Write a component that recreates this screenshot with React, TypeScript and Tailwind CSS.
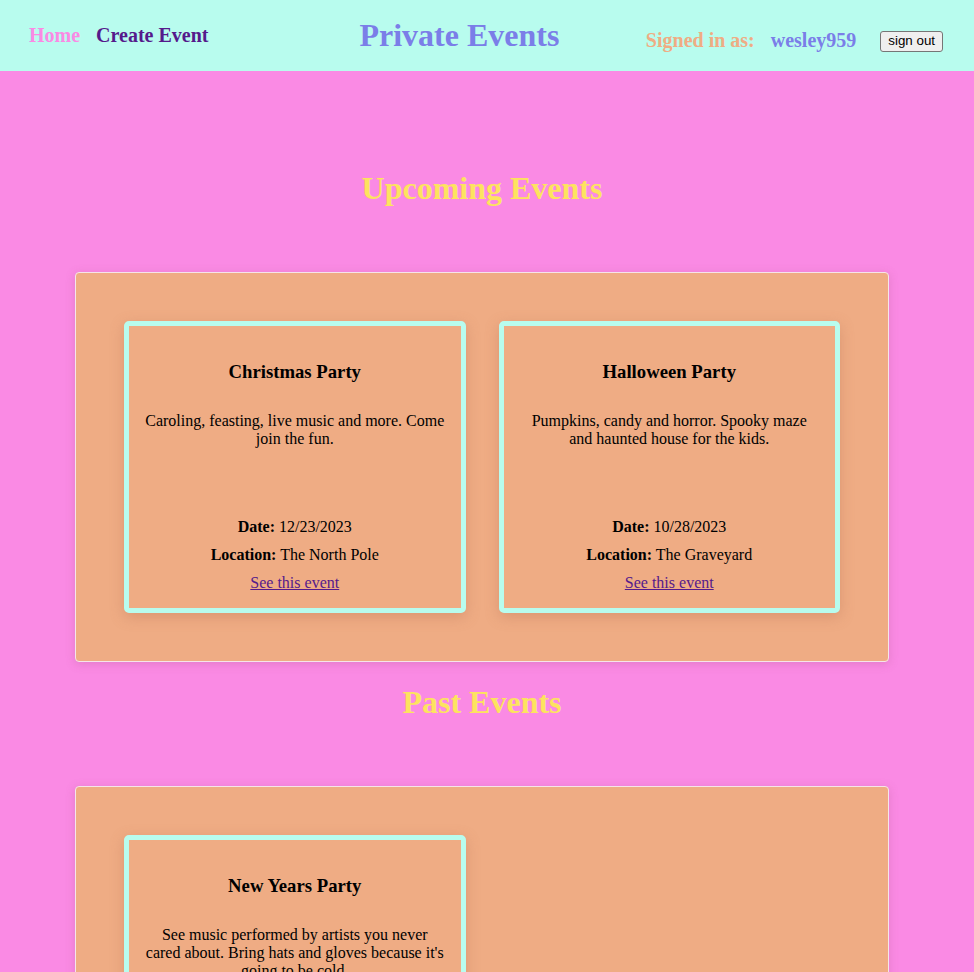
import React from 'react';

interface EventItem {
  title: string;
  description: string;
  date: string;
  location: string;
}

const upcoming: EventItem[] = [
  {
    title: 'Christmas Party',
    description: 'Caroling, feasting, live music and more. Come join the fun.',
    date: '12/23/2023',
    location: 'The North Pole',
  },
  {
    title: 'Halloween Party',
    description: 'Pumpkins, candy and horror. Spooky maze and haunted house for the kids.',
    date: '10/28/2023',
    location: 'The Graveyard',
  },
];

const past: EventItem[] = [
  {
    title: 'New Years Party',
    description: "See music performed by artists you never cared about. Bring hats and gloves because it's going to be cold.",
    date: '12/31/2022',
    location: 'Times Square',
  },
];

function EventCard({ event }: { event: EventItem }) {
  return (
    <div className="flex flex-col h-[292px] border-[5px] border-[#b8fcee] rounded-[5px] bg-[#efac84] px-4 pt-4 pb-4 text-center text-black shadow-[0_4px_14px_rgba(180,110,80,0.35)]">
      <h3 className="mt-[19px] mb-[29.5px] text-[18.72px] leading-[21px] font-bold">{event.title}</h3>
      <p className="h-[106.5px] text-[16px] leading-[18px]">{event.description}</p>
      <p className="text-[16px] leading-[18px]">
        <span className="font-bold">Date:</span> {event.date}
      </p>
      <p className="mt-[10px] text-[16px] leading-[18px]">
        <span className="font-bold">Location:</span> {event.location}
      </p>
      <a href="#" className="mt-[10px] text-[16px] leading-[18px] text-[#551a8b] underline">
        See this event
      </a>
    </div>
  );
}

function EventSection({ heading, events, spacing }: { heading: string; events: EventItem[]; spacing: string }) {
  return (
    <section>
      <h2 className={`${spacing} pr-[10px] text-center text-[32px] leading-[37px] font-bold text-[#fde35f]`}>{heading}</h2>
      <div className="ml-[75px] w-[814px] grid grid-cols-2 gap-[33px] p-12 bg-[#efac84] border border-[#f6e4e9] rounded-[4px] shadow-[0_2px_10px_rgba(160,80,120,0.25)]">
        {events.map((e) => (
          <EventCard key={e.title} event={e} />
        ))}
      </div>
    </section>
  );
}

export default function App() {
  return (
    <div className="min-h-screen bg-[#fa8ae4] pb-10 font-['Liberation_Serif',serif]">
      <header className="flex items-center h-[71px] pl-[29px] pr-[31px] bg-[#b8fcee]">
        <nav className="flex gap-4 text-[20px] font-bold leading-[23px]">
          <a href="#" className="text-[#fa8ae4]">Home</a>
          <a href="#" className="text-[#551a8b]">Create Event</a>
        </nav>
        <h1 className="ml-[151px] text-[32px] leading-[37px] font-bold text-[#7b7ee8]">Private Events</h1>
        <div className="ml-auto flex items-center pt-[9px] text-[20px] leading-[23px] font-bold">
          <span className="text-[#efac84]">Signed in as:</span>
          <span className="ml-[16px] text-[#7b7ee8]">wesley959</span>
          <button className="ml-6 mt-[2px] h-[21px] px-[7px] bg-[#efefef] border border-[#767676] rounded-[3px] text-[13.33px] leading-none font-normal text-black font-['Liberation_Sans',sans-serif]">
            sign out
          </button>
        </div>
      </header>
      <EventSection heading="Upcoming Events" events={upcoming} spacing="mt-[99px] mb-[65px]" />
      <EventSection heading="Past Events" events={past} spacing="mt-[22px] mb-[65px]" />
    </div>
  );
}
